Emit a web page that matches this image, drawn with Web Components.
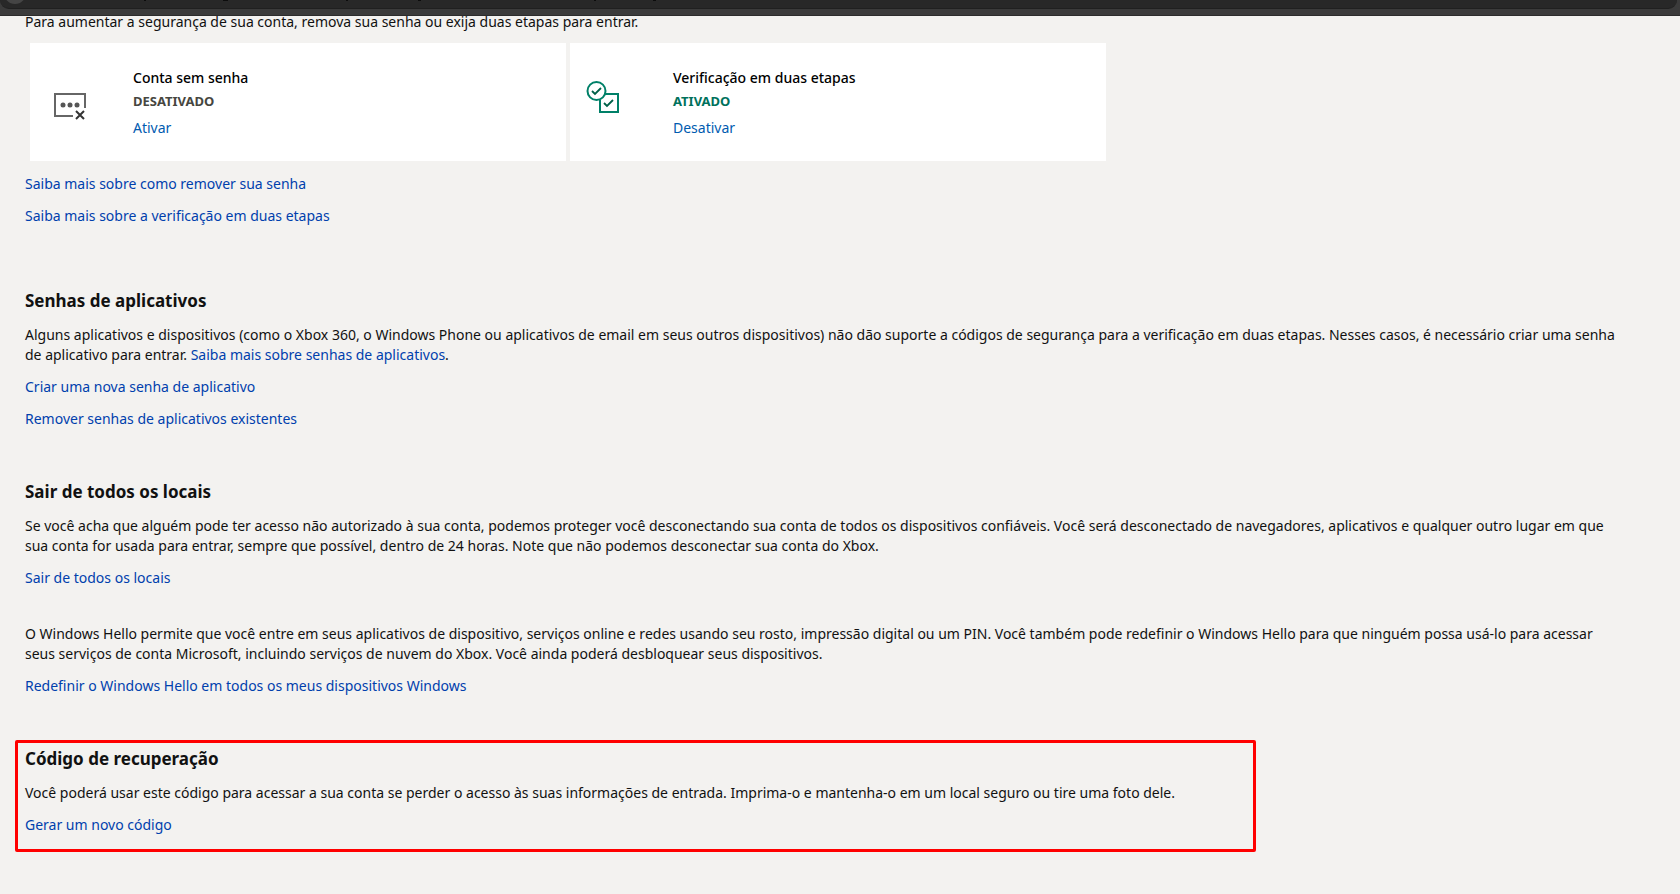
<!DOCTYPE html>
<html lang="pt-BR">
<head>
<meta charset="utf-8">
<title>Segurança da conta</title>
<style>
  body { margin: 0; background: #f3f2f0; color: #111; font: 14px/20px "Noto Sans", "Open Sans", sans-serif; }
</style>
</head>
<body>
<browser-edge></browser-edge>
<security-page></security-page>
<script>
const define = (name, html) => {
  const t = document.createElement('template');
  t.innerHTML = html;
  customElements.define(name, class extends HTMLElement {
    constructor() {
      super();
      this.attachShadow({ mode: 'open' }).append(t.content.cloneNode(true));
    }
  });
};

define('browser-edge', `
<style>
  :host { display: block; position: relative; z-index: 1; height: 16px; box-sizing: border-box; background: #3b3b3b; border-bottom: 1px solid #2c2c2c; }
  svg { display: block; width: 100%; height: 9px; }
  .field { height: 9px; margin-right: 3px; background: #282828; border-radius: 0 0 16px 16px; border-bottom: 1px solid #202020; box-sizing: border-box; overflow: hidden; }
</style>
<div class="field">
  <svg aria-hidden="true">
    <circle cx="15" cy="-7" r="11" fill="#454545"/>
    <path d="M144 0.5H146M223 0.5H228M346 0.5H348M418 0.5H421M594 0.5H596M653 0.5H656" stroke="#0c0c0c"/>
  </svg>
</div>`);

define('info-card', `
<style>
  :host { display: grid; grid-template-columns: 87px 1fr; flex: 1; min-height: 118px; box-sizing: border-box; background: #fff; padding: 25px 16px 16px; }
  h3 { margin: 0; font-size: 14px; font-weight: 500; color: #000; }
  .status { font-size: 13px; line-height: 26px; font-weight: 700; color: var(--status, #464640); }
  .action { line-height: 28px; }
</style>
<div class="icon"><slot name="icon"></slot></div>
<div>
  <h3><slot name="title"></slot></h3>
  <div class="status"><slot name="status"></slot></div>
  <div class="action"><slot></slot></div>
</div>`);

define('text-section', `
<style>
  :host { display: flex; flex-direction: column; gap: 12px; }
</style>
<slot></slot>`);

define('security-page', `
<style>
  :host { display: block; margin-top: -4px; padding: 0 60px 40px 25px; }
  p { margin: 0; }
  h2 { margin: 0; font-size: 17px; line-height: 24px; font-weight: 700; }
  a { color: #0040ad; text-decoration: none; }
  a:hover { text-decoration: underline; }
  info-card a { color: #005bb0; }
  .cards { display: flex; gap: 4px; max-width: 1076px; margin: 11px 5px 13px; }
  .links { margin-bottom: 63px; }
  .part { margin-bottom: 51px; }
  .near { margin-bottom: 36px; }
  .marked { border: 3px solid #f00; border-radius: 2px; margin: -7px 0 0 -10px; padding: 4px 7px 14px; max-width: 1221px; }
  svg { display: block; }
</style>
<p>Para aumentar a segurança de sua conta, remova sua senha ou exija duas etapas para entrar.</p>
<div class="cards">
  <info-card>
    <svg slot="icon" width="44" height="56" viewBox="46 68 44 56" fill="none" aria-hidden="true">
      <path d="M85 108V94H55V116H73" stroke="#666" stroke-width="2"/>
      <g fill="#555"><circle cx="63" cy="105" r="2.5"/><circle cx="70" cy="105" r="2.5"/><circle cx="77" cy="105" r="2.5"/></g>
      <path d="M76 111L84 119M84 111L76 119" stroke="#333" stroke-width="2"/>
    </svg>
    <span slot="title">Conta sem senha</span>
    <span slot="status">DESATIVADO</span>
    <a href="#">Ativar</a>
  </info-card>
  <info-card style="--status: #00715c">
    <svg slot="icon" width="44" height="56" viewBox="586 68 44 56" fill="none" stroke="#008068" aria-hidden="true">
      <circle cx="596.5" cy="91" r="9" stroke-width="2"/>
      <path d="M605 94H618V112H600V100" stroke-width="2"/>
      <path d="M592 91L595 94L601 88M604 103L607 106L613 100" stroke="#006048" stroke-width="1.8"/>
    </svg>
    <span slot="title">Verificação em duas etapas</span>
    <span slot="status">ATIVADO</span>
    <a href="#">Desativar</a>
  </info-card>
</div>
<text-section class="links">
  <p><a href="#">Saiba mais sobre como remover sua senha</a></p>
  <p><a href="#">Saiba mais sobre a verificação em duas etapas</a></p>
</text-section>
<text-section class="part">
  <h2>Senhas de aplicativos</h2>
  <p>Alguns aplicativos e dispositivos (como o Xbox 360, o Windows Phone ou aplicativos de email em seus outros dispositivos) não dão suporte a códigos de segurança para a verificação em duas etapas. Nesses casos, é necessário criar uma senha de aplicativo para entrar. <a href="#">Saiba mais sobre senhas de aplicativos</a>.</p>
  <p><a href="#">Criar uma nova senha de aplicativo</a></p>
  <p><a href="#">Remover senhas de aplicativos existentes</a></p>
</text-section>
<text-section class="near">
  <h2>Sair de todos os locais</h2>
  <p>Se você acha que alguém pode ter acesso não autorizado à sua conta, podemos proteger você desconectando sua conta de todos os dispositivos confiáveis. Você será desconectado de navegadores, aplicativos e qualquer outro lugar em que sua conta for usada para entrar, sempre que possível, dentro de 24 horas. Note que não podemos desconectar sua conta do Xbox.</p>
  <p><a href="#">Sair de todos os locais</a></p>
</text-section>
<text-section class="part">
  <p>O Windows Hello permite que você entre em seus aplicativos de dispositivo, serviços online e redes usando seu rosto, impressão digital ou um PIN. Você também pode redefinir o Windows Hello para que ninguém possa usá-lo para acessar seus serviços de conta Microsoft, incluindo serviços de nuvem do Xbox. Você ainda poderá desbloquear seus dispositivos.</p>
  <p><a href="#">Redefinir o Windows Hello em todos os meus dispositivos Windows</a></p>
</text-section>
<text-section class="marked">
  <h2>Código de recuperação</h2>
  <p>Você poderá usar este código para acessar a sua conta se perder o acesso às suas informações de entrada. Imprima-o e mantenha-o em um local seguro ou tire uma foto dele.</p>
  <p><a href="#">Gerar um novo código</a></p>
</text-section>`);
</script>
</body>
</html>
